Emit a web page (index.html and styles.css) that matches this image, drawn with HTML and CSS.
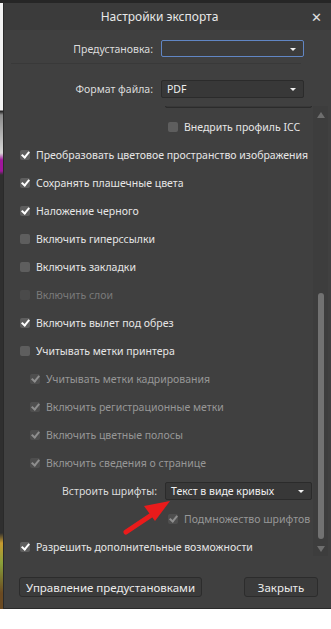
FILE: index.html
```html
<!doctype html>
<html lang="ru">
  <head>
    <meta charset="UTF-8" />
    <meta name="viewport" content="width=device-width, initial-scale=1.0" />
    <title>Настройки экспорта</title>
    <link rel="stylesheet" href="styles.css">
  </head>

  <body>
    <div class="topline"></div>
    <div class="main">
      <div class="backdrop"></div>
      <div class="dialog">
        <div class="titlebar">
          <span class="title">Настройки экспорта</span>
          <span class="close">✕</span>
        </div>

        <div class="head">
          <div class="field">
            <label>Предустановка:</label>
            <div class="select focus"></div>
          </div>
          <div class="sep"></div>
          <div class="field">
            <label>Формат файла:</label>
            <div class="select">PDF</div>
          </div>
        </div>

        <div class="scroll">
          <div class="scroll-content">
            <!-- row scrolled out of view, only its box edge shows -->
            <div class="field row">
              <label></label>
              <div class="select blank"></div>
            </div>
            <div class="check row aside"><span class="box"></span>Внедрить профиль ICC</div>
            <div class="check row"><span class="box on"></span>Преобразовать цветовое пространство изображения</div>
            <div class="check row"><span class="box on"></span>Сохранять плашечные цвета</div>
            <div class="check row"><span class="box on"></span>Наложение черного</div>
            <div class="check row"><span class="box"></span>Включить гиперссылки</div>
            <div class="check row"><span class="box"></span>Включить закладки</div>
            <div class="check row off"><span class="box"></span>Включить слои</div>
            <div class="check row"><span class="box on"></span>Включить вылет под обрез</div>
            <div class="check row"><span class="box"></span>Учитывать метки принтера</div>
            <div class="check row sub dim"><span class="box on"></span>Учитывать метки кадрирования</div>
            <div class="check row sub dim"><span class="box on"></span>Включить регистрационные метки</div>
            <div class="check row sub dim"><span class="box on"></span>Включить цветные полосы</div>
            <div class="check row sub dim"><span class="box on"></span>Включить сведения о странице</div>
            <div class="field row">
              <label>Встроить шрифты:</label>
              <div class="select">Текст в виде кривых</div>
            </div>
            <div class="check row aside dim"><span class="box on"></span>Подмножество шрифтов</div>
            <div class="check row"><span class="box on"></span>Разрешить дополнительные возможности</div>
          </div>
          <div class="scrollbar">
            <span class="arrow up"></span>
            <div class="track"><div class="thumb"></div></div>
            <span class="arrow down"></span>
          </div>
        </div>

        <div class="footer">
          <button class="btn wide">Управление предустановками</button>
          <button class="btn">Закрыть</button>
        </div>

        <svg class="pointer" width="60" height="40" viewBox="0 0 60 40">
          <line x1="4" y1="35" x2="34" y2="15" stroke="#ea1b1b" stroke-width="5" stroke-linecap="round" />
          <polygon points="48,4 22,9 33,24" fill="#ea1b1b" />
        </svg>
      </div>
    </div>
  </body>
</html>
```

FILE: styles.css
```css
:root {
  --dialog-bg: #404040;
  --title-bg: #3b3b3b;
  --text: #e6e6e6;
  --text-dim: #979797;
  --box: #5e5e5e;
}

* {
  box-sizing: border-box;
  font-family: "Noto Sans", "Open Sans", sans-serif;
}

body {
  margin: 0;
  width: 331px;
  height: 629px;
  background: #ffffff;
  overflow: hidden;
}

.topline {
  height: 3px;
  background: #262626;
}

.main {
  display: flex;
  height: 606px;
}

.backdrop {
  width: 3px;
  background: linear-gradient(
    #f2f2f2 0, #f2f2f2 107px, #1c1c1c 108px, #8c8c8c 112px, #d8d8d8 150px,
    #a0169c 157px, #a0169c 168px, #2f2f2f 172px, #2f2f2f 530px,
    #c79a2f 540px, #8aa03a 560px, #6b4a22 590px, #6b4a22 606px
  );
}

.dialog {
  position: relative;
  flex: 1;
  display: flex;
  flex-direction: column;
  background: var(--dialog-bg);
  border-left: 1px solid #2a2a2a;
  border-bottom: 1px solid #2a2a2a;
  color: var(--text);
  font-size: 10.5px;
}

.titlebar {
  height: 27px;
  display: flex;
  align-items: center;
  justify-content: center;
  position: relative;
  background: var(--title-bg);
}

.title {
  font-size: 12px;
  color: #e8e8e8;
  margin-left: -16px;
}

.close {
  position: absolute;
  right: 9px;
  top: 5px;
  font-size: 13px;
  color: #e0e0e0;
}

.head {
  padding-top: 10px;
}

.field {
  display: flex;
  align-items: center;
  gap: 8px;
}

.field label {
  width: 149px;
  text-align: right;
  color: #dcdcdc;
}

.select {
  position: relative;
  width: 143px;
  height: 18px;
  padding: 0 5px;
  line-height: 16px;
  background: #383838;
  border: 1px solid #2b2b2b;
  border-radius: 2px;
  color: #f0f0f0;
}

.select::after {
  content: "";
  position: absolute;
  right: 7px;
  top: 7px;
  border-left: 3px solid transparent;
  border-right: 3px solid transparent;
  border-top: 3px solid #f0f0f0;
}

.select.focus {
  height: 17px;
  background: #3c3c3c;
  border-color: #6186c4;
}

.sep {
  height: 1px;
  margin: 6px 30px 16px 7px;
  background: #393939;
}

.scroll {
  display: flex;
  height: 450px;
  margin: 8px 3px 0 0;
  overflow: hidden;
}

.scroll-content {
  flex: 1;
  margin-top: -21px;
}

.row {
  height: 28px;
}

.row.field label {
  width: 153px;
}

.row .select {
  width: 147px;
}

.check {
  display: flex;
  align-items: center;
  gap: 6px;
  padding-left: 16px;
  white-space: nowrap;
}

.check.sub {
  padding-left: 26px;
}

.check.aside {
  padding-left: 164px;
}

.check.dim {
  color: var(--text-dim);
}

.check.off {
  color: #7a7a7a;
}

.box {
  position: relative;
  flex: none;
  width: 10px;
  height: 10px;
  border-radius: 2px;
  background: var(--box);
}

.box.on::after {
  content: "";
  position: absolute;
  left: 3px;
  top: 0;
  width: 3px;
  height: 6px;
  border-right: 2px solid #ffffff;
  border-bottom: 2px solid #ffffff;
  transform: rotate(40deg);
}

.dim .box {
  background: #4e4e4e;
}

.dim .box.on::after {
  border-color: #8e8e8e;
}

.off .box {
  background: #4a4a4a;
}

.scrollbar {
  width: 15px;
  display: flex;
  flex-direction: column;
  align-items: center;
  background: #3d3d3d;
  padding: 6px 0 4px;
}

.arrow {
  width: 0;
  height: 0;
  border-left: 4px solid transparent;
  border-right: 4px solid transparent;
}

.arrow.up {
  border-bottom: 6px solid #6e6e6e;
}

.arrow.down {
  border-top: 6px solid #6e6e6e;
}

.track {
  flex: 1;
  width: 100%;
  display: flex;
  flex-direction: column;
  justify-content: flex-end;
  align-items: center;
  padding: 0 0 7px;
}

.thumb {
  width: 6px;
  height: 246px;
  border-radius: 3px;
  background: #727272;
}

.footer {
  display: flex;
  justify-content: space-between;
  padding: 21px 13px 0 15px;
}

.btn {
  height: 20px;
  padding: 0;
  background: #3b3b3b;
  border: 1px solid #2c2c2c;
  border-radius: 3px;
  color: #ececec;
  font-size: 11.5px;
  white-space: nowrap;
}

.btn.wide {
  width: 183px;
}

.btn:last-child {
  width: 74px;
}

.pointer {
  position: absolute;
  left: 118px;
  top: 494px;
}
```
